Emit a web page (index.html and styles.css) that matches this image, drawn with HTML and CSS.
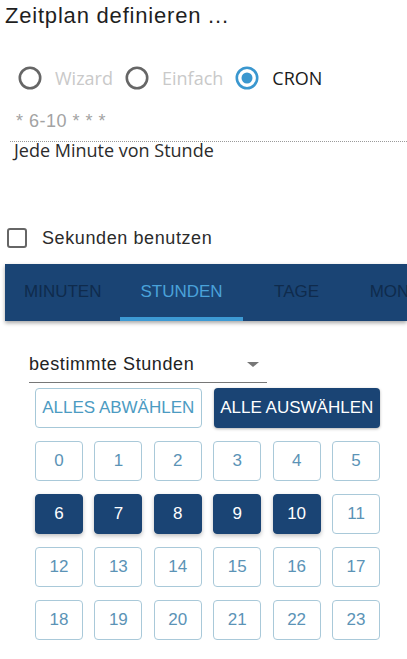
FILE: index.html
```html
<!DOCTYPE html>
<html lang="de">
<head>
<meta charset="utf-8">
<title>Zeitplan definieren</title>
<link rel="stylesheet" href="styles.css">
</head>
<body>
<h1 class="title">Zeitplan definieren ...</h1>

<div class="modes">
  <label class="radio">
    <svg class="radio-icon" width="24" height="24" viewBox="0 0 24 24"><circle cx="12" cy="12" r="10.2" fill="none" stroke="#666" stroke-width="2.6"/></svg>
    <span class="radio-label muted">Wizard</span>
  </label>
  <label class="radio">
    <svg class="radio-icon" width="24" height="24" viewBox="0 0 24 24"><circle cx="12" cy="12" r="10.2" fill="none" stroke="#666" stroke-width="2.6"/></svg>
    <span class="radio-label muted">Einfach</span>
  </label>
  <label class="radio">
    <svg class="radio-icon" width="24" height="24" viewBox="0 0 24 24"><circle cx="12" cy="12" r="10.2" fill="none" stroke="#3a97cf" stroke-width="2.6"/><circle cx="12" cy="12" r="5.5" fill="#3a97cf"/></svg>
    <span class="radio-label">CRON</span>
  </label>
</div>

<div class="cron-field">* 6-10 * * *</div>
<div class="description">Jede Minute von Stunde</div>

<label class="check">
  <span class="check-box"></span>
  <span class="check-label">Sekunden benutzen</span>
</label>

<div class="tabs">
  <div class="tab">MINUTEN</div>
  <div class="tab active">STUNDEN</div>
  <div class="tab">TAGE</div>
  <div class="tab">MONATE</div>
  <div class="tab">WOCHENTAGE</div>
</div>

<div class="panel">
  <div class="select">
    <span class="select-value">bestimmte Stunden</span>
    <span class="select-arrow"></span>
  </div>
  <div class="actions">
    <button class="btn btn-outline">ALLES ABWÄHLEN</button>
    <button class="btn btn-filled">ALLE AUSWÄHLEN</button>
  </div>
  <div class="hours">
    <button class="hour">0</button>
    <button class="hour">1</button>
    <button class="hour">2</button>
    <button class="hour">3</button>
    <button class="hour">4</button>
    <button class="hour">5</button>
    <button class="hour on">6</button>
    <button class="hour on">7</button>
    <button class="hour on">8</button>
    <button class="hour on">9</button>
    <button class="hour on">10</button>
    <button class="hour">11</button>
    <button class="hour">12</button>
    <button class="hour">13</button>
    <button class="hour">14</button>
    <button class="hour">15</button>
    <button class="hour">16</button>
    <button class="hour">17</button>
    <button class="hour">18</button>
    <button class="hour">19</button>
    <button class="hour">20</button>
    <button class="hour">21</button>
    <button class="hour">22</button>
    <button class="hour">23</button>
  </div>
</div>
</body>
</html>
```

FILE: styles.css
```css
html, body {
  margin: 0;
  padding: 0;
  background: #fff;
}
body {
  width: 407px;
  height: 659px;
  overflow: hidden;
  font-family: "Liberation Sans", Arial, sans-serif;
  color: #222;
}
.title {
  margin: 0;
  padding: 5px 0 0 5px;
  font-size: 22px;
  line-height: 22px;
  font-weight: normal;
  letter-spacing: 0.8px;
  color: #1f1f1f;
}
.modes {
  display: flex;
  align-items: center;
  height: 24px;
  margin-top: 39px;
  padding-left: 18px;
  gap: 12px;
}
.radio {
  display: flex;
  align-items: center;
  gap: 13px;
}
.radio-icon {
  display: block;
  flex: none;
}
.radio-label {
  font-family: "Open Sans", "Noto Sans", sans-serif;
  font-size: 18px;
  color: #1a1a1a;
}
.radio-label.muted {
  color: #c9c9c9;
}
.cron-field {
  margin: 14px 0 0 10px;
  padding: 7px 0 10px 6px;
  font-size: 18px;
  line-height: 20px;
  letter-spacing: 0.5px;
  color: #a3a3a3;
  border-bottom: 1px dotted #9a9a9a;
}
.description {
  padding-left: 14px;
  font-family: "Open Sans", "Noto Sans", sans-serif;
  font-size: 18px;
  line-height: 17px;
  color: #2b2b2b;
}
.check {
  display: flex;
  align-items: center;
  height: 24px;
  margin-top: 67px;
  padding-left: 7px;
  gap: 15px;
}
.check-box {
  box-sizing: border-box;
  width: 20px;
  height: 20px;
  border: 2.5px solid #666;
  border-radius: 3px;
}
.check-label {
  font-size: 18px;
  letter-spacing: 0.6px;
  color: #2b2b2b;
}
.tabs {
  display: flex;
  margin: 14px 0 0 5px;
  height: 57px;
  background: #1a4474;
  box-shadow: 0 2px 4px rgba(0, 0, 0, 0.35);
  overflow: hidden;
}
.tab {
  flex: none;
  min-width: 108px;
  box-sizing: border-box;
  padding: 2px 19px 0;
  display: flex;
  align-items: center;
  justify-content: center;
  font-size: 17px;
  color: #0f2b4c;
  border-bottom: 4px solid transparent;
}
.tab.active {
  color: #4aa2da;
  border-bottom-color: #3d9ad4;
  padding-left: 20px;
  padding-right: 20px;
}
.panel {
  padding-left: 29px;
}
.select {
  position: relative;
  width: 238px;
  margin-top: 32px;
  padding-bottom: 7px;
  border-bottom: 1px solid #777;
  font-size: 18px;
  line-height: 22px;
  letter-spacing: 0.6px;
  color: #222;
}
.select-arrow {
  position: absolute;
  right: 8px;
  top: 9px;
  width: 0;
  height: 0;
  border-left: 6px solid transparent;
  border-right: 6px solid transparent;
  border-top: 5px solid #777;
}
.actions {
  display: grid;
  grid-template-columns: 1fr 1fr;
  gap: 12px;
  width: 345px;
  margin: 5px 0 0 6px;
}
.btn {
  height: 40px;
  box-sizing: border-box;
  border-radius: 4px;
  font-family: "Liberation Sans", Arial, sans-serif;
  font-size: 17px;
  padding: 0;
  white-space: nowrap;
}
.btn-outline {
  background: #fff;
  border: 1px solid #a6c8d8;
  color: #4c9bc2;
}
.btn-filled {
  background: #1a4474;
  border: none;
  color: #fff;
  box-shadow: 0 1px 3px rgba(0, 0, 0, 0.3);
}
.hours {
  display: grid;
  grid-template-columns: repeat(6, 1fr);
  column-gap: 11.5px;
  row-gap: 13px;
  width: 345px;
  margin: 13px 0 0 6px;
}
.hour {
  height: 40px;
  box-sizing: border-box;
  border: 1px solid #a9c9d9;
  border-radius: 4px;
  background: #fff;
  color: #5b93b6;
  font-family: "Liberation Sans", Arial, sans-serif;
  font-size: 17px;
  padding: 0;
}
.hour.on {
  background: #1a4474;
  border-color: #1a4474;
  color: #fff;
  box-shadow: 0 2px 4px rgba(0, 0, 0, 0.25);
}
```
